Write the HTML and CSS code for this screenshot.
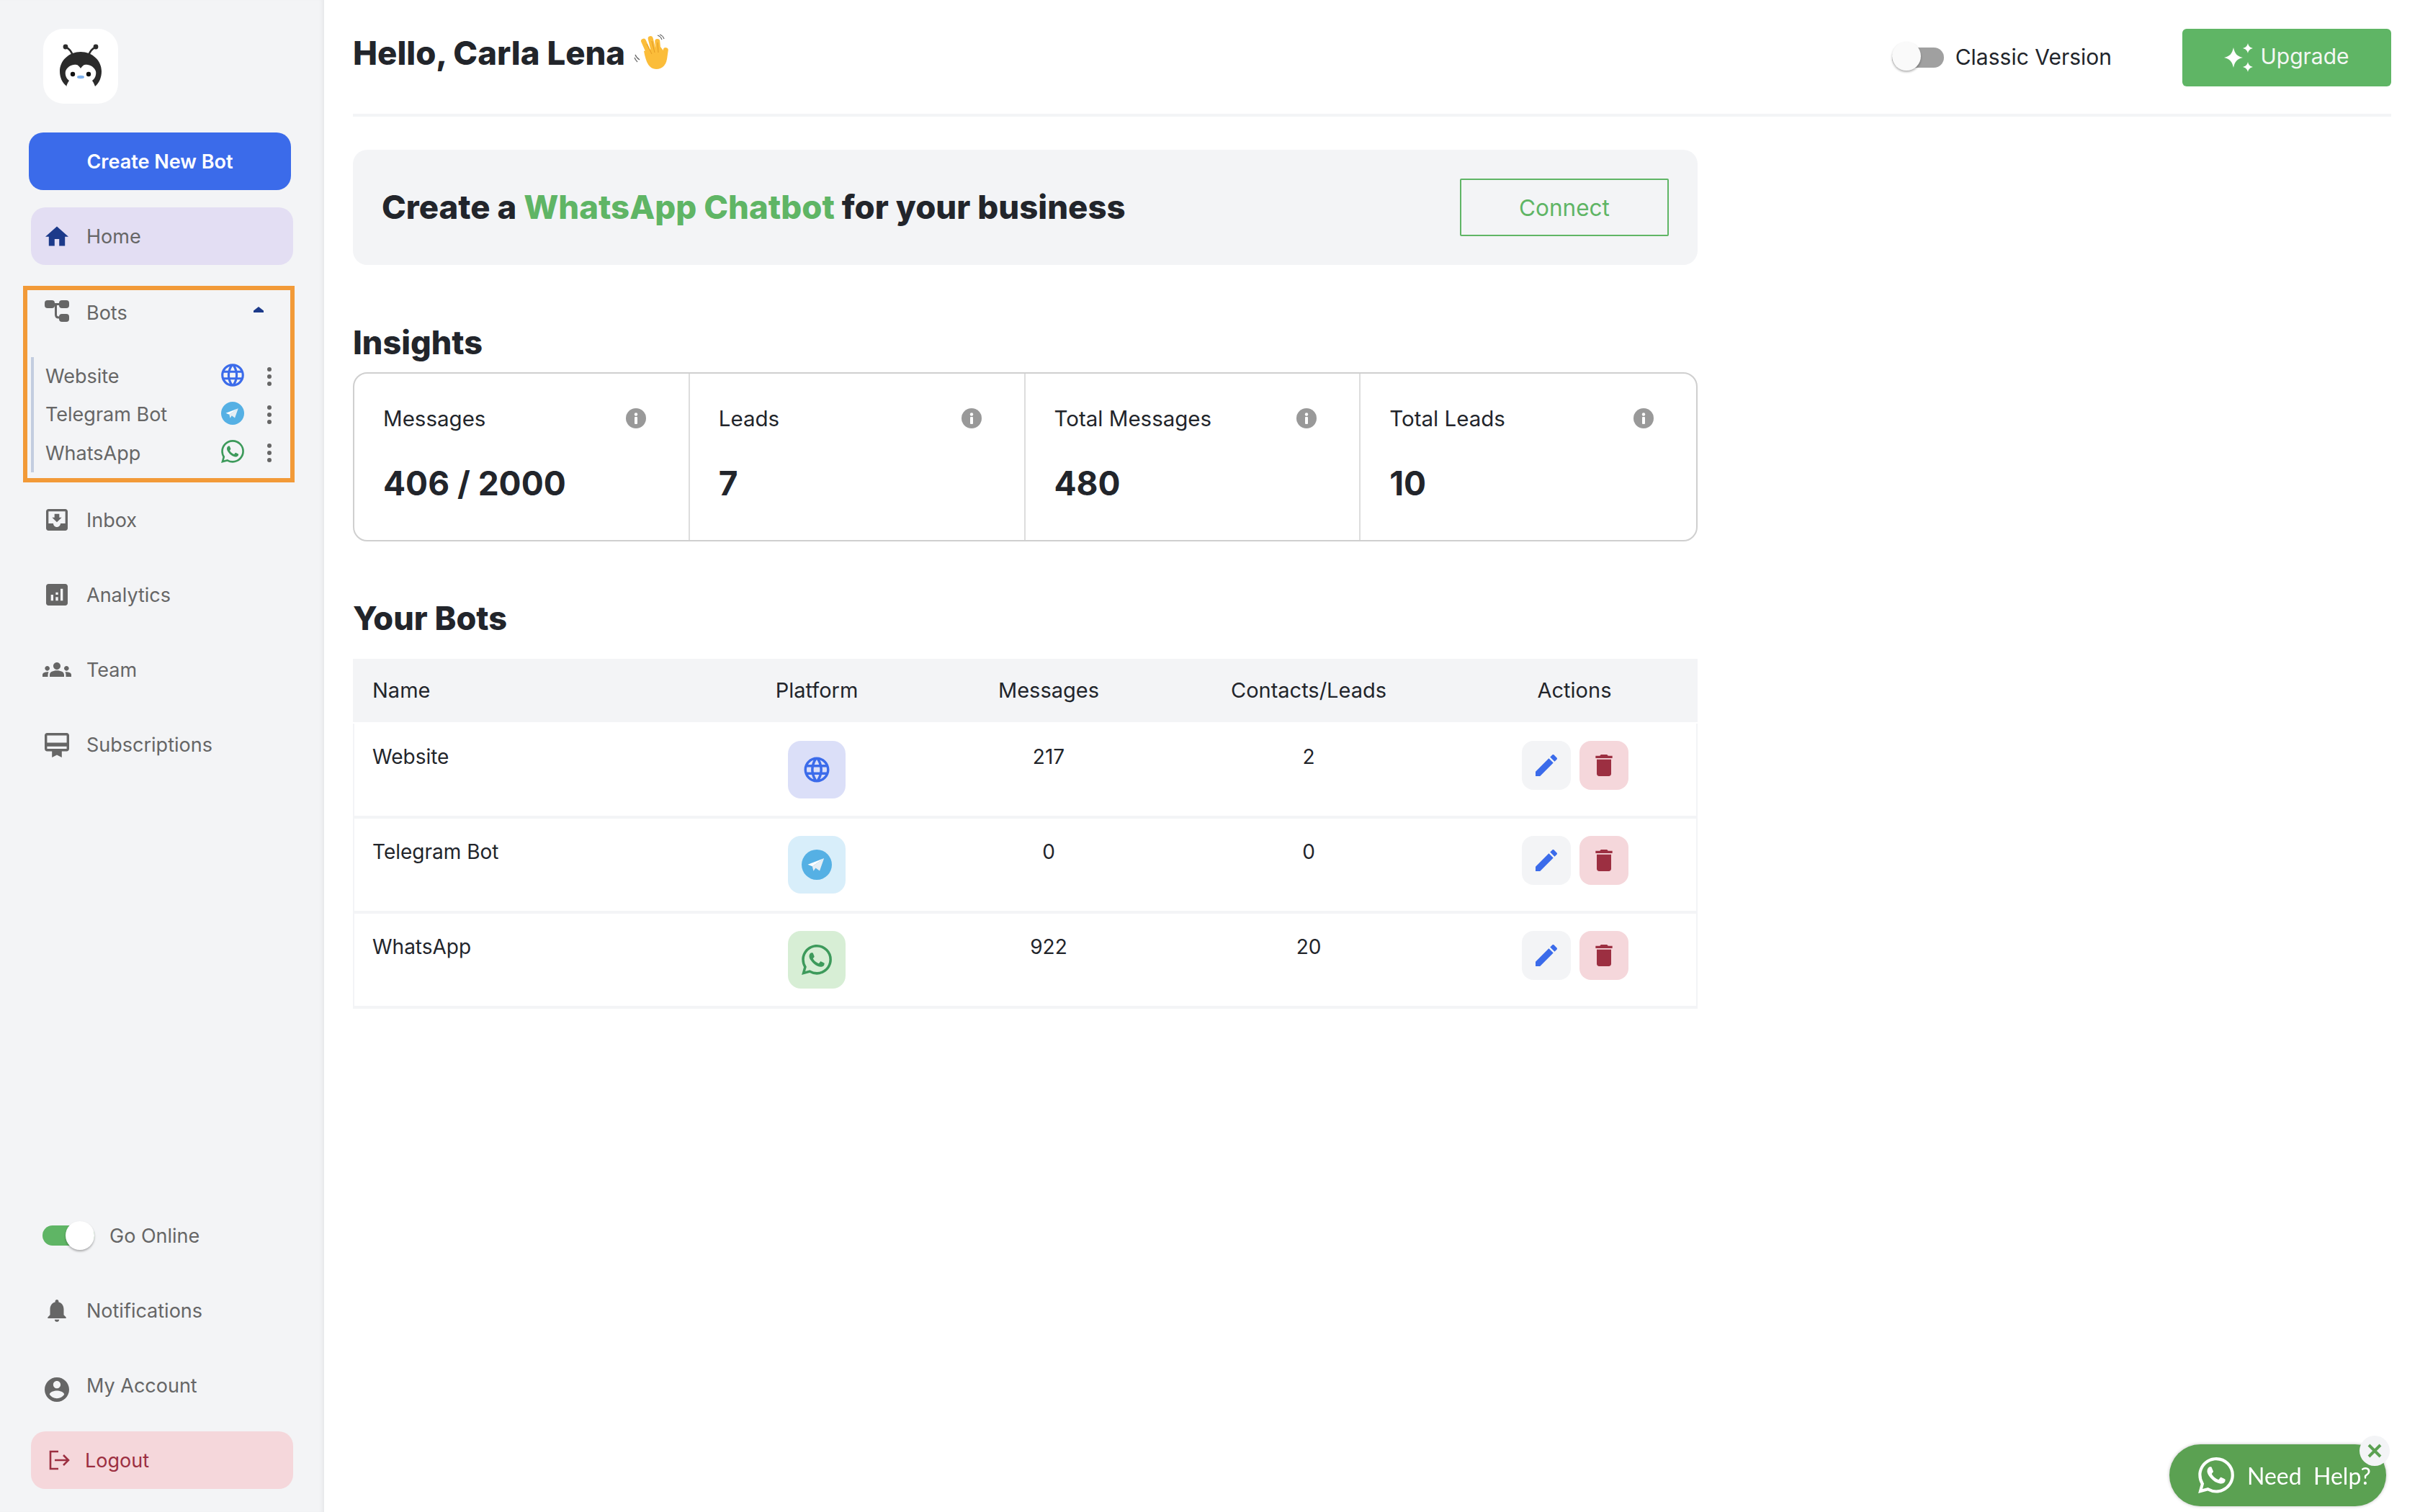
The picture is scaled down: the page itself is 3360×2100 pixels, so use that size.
FILE: index.html
```html
<!DOCTYPE html>
<html lang="en">
<head>
<meta charset="utf-8">
<title>Dashboard</title>
<link rel="stylesheet" href="styles.css">
</head>
<body>
<svg class="defs" width="0" height="0" aria-hidden="true">
  <symbol id="i-globe" viewBox="0 0 24 24"><path d="M11.99 2C6.47 2 2 6.48 2 12s4.47 10 9.99 10C17.52 22 22 17.52 22 12S17.52 2 11.99 2zm6.93 6h-2.95c-.32-1.25-.78-2.45-1.38-3.56 1.84.63 3.37 1.91 4.33 3.56zM12 4.04c.83 1.2 1.48 2.53 1.91 3.96h-3.82c.43-1.43 1.08-2.76 1.91-3.96zM4.26 14C4.1 13.36 4 12.69 4 12s.1-1.36.26-2h3.38c-.08.66-.14 1.32-.14 2 0 .68.06 1.34.14 2H4.26zm.82 2h2.95c.32 1.25.78 2.45 1.38 3.56-1.84-.63-3.37-1.9-4.33-3.56zm2.95-8H5.08c.96-1.66 2.49-2.93 4.33-3.56C8.81 5.55 8.35 6.75 8.03 8zM12 19.96c-.83-1.2-1.48-2.53-1.91-3.96h3.82c-.43 1.43-1.08 2.76-1.91 3.96zM14.34 14H9.66c-.09-.66-.16-1.32-.16-2 0-.68.07-1.35.16-2h4.68c.09.65.16 1.32.16 2 0 .68-.07 1.34-.16 2zm.25 5.56c.6-1.11 1.06-2.31 1.38-3.56h2.95c-.96 1.65-2.49 2.93-4.33 3.56zM16.36 14c.08-.66.14-1.32.14-2 0-.68-.06-1.34-.14-2h3.38c.16.64.26 1.31.26 2s-.1 1.36-.26 2h-3.38z"/></symbol>
  <symbol id="i-whatsapp" viewBox="0 0 24 24"><path d="M17.472 14.382c-.297-.149-1.758-.867-2.03-.967-.273-.099-.471-.148-.67.15-.197.297-.767.966-.94 1.164-.173.199-.347.223-.644.075-.297-.15-1.255-.463-2.39-1.475-.883-.788-1.48-1.761-1.653-2.059-.173-.297-.018-.458.13-.606.134-.133.298-.347.446-.52.149-.174.198-.298.298-.497.099-.198.05-.371-.025-.52-.075-.149-.669-1.612-.916-2.207-.242-.579-.487-.5-.669-.51-.173-.008-.371-.01-.57-.01-.198 0-.52.074-.792.372-.272.297-1.04 1.016-1.04 2.479 0 1.462 1.065 2.875 1.213 3.074.149.198 2.096 3.2 5.077 4.487.709.306 1.262.489 1.694.625.712.227 1.36.195 1.871.118.571-.085 1.758-.719 2.006-1.413.248-.694.248-1.289.173-1.413-.074-.124-.272-.198-.57-.347m-5.421 7.403h-.004a9.87 9.87 0 01-5.031-1.378l-.361-.214-3.741.982.998-3.648-.235-.374a9.86 9.86 0 01-1.51-5.26c.001-5.45 4.436-9.884 9.888-9.884 2.64 0 5.122 1.03 6.988 2.898a9.825 9.825 0 012.893 6.994c-.003 5.45-4.437 9.884-9.885 9.884m8.413-18.297A11.815 11.815 0 0012.05 0C5.495 0 .16 5.335.157 11.892c0 2.096.547 4.142 1.588 5.945L.057 24l6.305-1.654a11.882 11.882 0 005.683 1.448h.005c6.554 0 11.89-5.335 11.893-11.893a11.821 11.821 0 00-3.48-8.413z"/></symbol>
  <symbol id="i-telegram" viewBox="0 0 24 24"><circle cx="12" cy="12" r="12" fill="#55b0e4"/><path d="M17.8 6.9 4.9 11.8l3.6 1.5z" fill="#fff"/><path d="M17.8 6.9 8.5 13.3l.9 3.7 1.7-2.5 3.2 2.3z" fill="#e6eef4"/></symbol>
  <symbol id="i-dots" viewBox="0 0 8 28"><circle cx="4" cy="4" r="3"/><circle cx="4" cy="14" r="3"/><circle cx="4" cy="24" r="3"/></symbol>
  <symbol id="i-info" viewBox="0 0 28 28"><circle cx="14" cy="14" r="14" fill="#999"/><rect x="12" y="12" width="4" height="10" rx="1" fill="#fff"/><circle cx="14" cy="8.5" r="2.2" fill="#fff"/></symbol>
  <symbol id="i-edit" viewBox="0 0 24 24"><path d="M3 17.25V21h3.75L17.81 9.94l-3.75-3.75L3 17.25zM20.71 7.04c.39-.39.39-1.02 0-1.41l-2.34-2.34c-.39-.39-1.02-.39-1.41 0l-1.83 1.83 3.75 3.75 1.83-1.83z"/></symbol>
  <symbol id="i-delete" viewBox="0 0 24 24"><path d="M6 19c0 1.1.9 2 2 2h8c1.1 0 2-.9 2-2V7H6v12zM19 4h-3.5l-1-1h-5l-1 1H5v2h14V4z"/></symbol>
</svg>

<div class="app">
  <aside class="sidebar">
    <div class="logo">
      <svg class="logo-art" viewBox="0 0 58 65">
        <path d="M18 17C16 11 14 8 9 6M40 17C42 11 44 8 49 6" fill="none" stroke="#2b2b2b" stroke-width="2.600"/>
        <circle cx="8" cy="5" r="3.400" fill="#2b2b2b"/><circle cx="50" cy="5" r="3.400" fill="#2b2b2b"/>
        <path d="M10 60C3 55 0 47 0 39 0 24 13 12 29 12s29 12 29 27c0 8-3 16-9 21-1-3-2-5-4-8 4-3 6-8 5-13-2-6-9-10-15-9-2 0-4 2-6 5-2-3-4-5-6-5-6-1-13 3-15 9-1 5 1 10 5 13-2 3-3 5-4 8z" fill="#2b2b2b"/>
        <circle cx="18" cy="43" r="3.200" fill="#111"/><circle cx="40" cy="43" r="3.200" fill="#111"/>
        <ellipse cx="29" cy="47" rx="5" ry="2.200" fill="#7fb2ee"/>
      </svg>
    </div>
    <button class="create-btn">Create New Bot</button>

    <nav class="nav">
      <a class="nav-item nav-active">
        <svg class="nav-icon icon-home" viewBox="2 3 20 17"><path d="M10 20v-6h4v6h5v-8h3L12 3 2 12h3v8z"/></svg>
        <span>Home</span>
      </a>
      <section class="bots-box">
        <div class="bots-head">
          <svg class="nav-icon" viewBox="0 0 34 30"><rect x="0" y="0" width="14" height="11" rx="4"/><rect x="20" y="0" width="14" height="11" rx="4"/><rect x="20" y="19" width="14" height="11" rx="4"/><path d="M13 5.500h8M15.500 5.500V20q0 4 4 4H21" fill="none" stroke="#666" stroke-width="3"/></svg>
          <span class="bots-label">Bots</span>
          <span class="caret"></span>
        </div>
        <ul class="bot-list">
          <li class="bot-item">
            <span class="bot-name">Website</span>
            <svg class="bot-icon icon-blue"><use href="#i-globe"/></svg>
            <svg class="dots"><use href="#i-dots"/></svg>
          </li>
          <li class="bot-item">
            <span class="bot-name">Telegram Bot</span>
            <svg class="bot-icon tg-small"><use href="#i-telegram"/></svg>
            <svg class="dots"><use href="#i-dots"/></svg>
          </li>
          <li class="bot-item">
            <span class="bot-name">WhatsApp</span>
            <svg class="bot-icon tg-small icon-wa"><use href="#i-whatsapp"/></svg>
            <svg class="dots"><use href="#i-dots"/></svg>
          </li>
        </ul>
      </section>
      <a class="nav-item">
        <svg class="nav-icon" viewBox="3 3 18 18"><path d="M19 3H4.990c-1.110 0-1.980.890-1.980 2L3 19c0 1.100.880 2 1.990 2H19c1.100 0 2-.9 2-2V5c0-1.110-.9-2-2-2zm0 12h-4c0 1.660-1.350 3-3 3s-3-1.340-3-3H4.990V5H19v10zm-3-5h-2V7h-4v3H8l4 4 4-4z"/></svg>
        <span>Inbox</span>
      </a>
      <a class="nav-item">
        <svg class="nav-icon" viewBox="3 3 18 18"><path d="M19 3H5c-1.100 0-2 .9-2 2v14c0 1.100.9 2 2 2h14c1.100 0 2-.9 2-2V5c0-1.100-.9-2-2-2zM9 17H7v-5h2v5zm4 0h-2v-3h2v3zm0-5h-2v-2h2v2zm4 5h-2V7h2v10z"/></svg>
        <span>Analytics</span>
      </a>
      <a class="nav-item">
        <svg class="nav-icon icon-team" viewBox="0 0 24 24"><path d="M12 12.750c1.630 0 3.070.390 4.240.9 1.080.480 1.760 1.560 1.760 2.730V18H6v-1.610c0-1.180.680-2.260 1.760-2.730 1.170-.520 2.610-.910 4.240-.910zM4 13c1.100 0 2-.9 2-2s-.9-2-2-2-2 .9-2 2 .9 2 2 2zm1.130 1.100c-.370-.060-.740-.1-1.130-.1-.990 0-1.930.210-2.780.580C.480 14.900 0 15.620 0 16.430V18h4.500v-1.610c0-.830.230-1.610.630-2.290zM20 13c1.100 0 2-.9 2-2s-.9-2-2-2-2 .9-2 2 .9 2 2 2zm4 3.430c0-.810-.480-1.530-1.220-1.850-.850-.370-1.790-.580-2.780-.580-.390 0-.760.040-1.130.1.400.680.630 1.460.630 2.290V18H24v-1.570zM12 6c1.660 0 3 1.340 3 3s-1.340 3-3 3-3-1.340-3-3 1.340-3 3-3z"/></svg>
        <span>Team</span>
      </a>
      <a class="nav-item">
        <svg class="nav-icon icon-sub" viewBox="2 2 20 20"><path d="M20 2H4c-1.110 0-2 .890-2 2v11c0 1.110.890 2 2 2h4v5l4-2 4 2v-5h4c1.110 0 2-.890 2-2V4c0-1.110-.890-2-2-2zm0 13H4v-2h16v2zm0-5H4V4h16v6z"/></svg>
        <span>Subscriptions</span>
      </a>
    </nav>

    <div class="nav nav-bottom">
      <div class="nav-item online-row">
        <span class="switch switch-on"><span class="thumb"></span></span>
        <span>Go Online</span>
      </div>
      <a class="nav-item">
        <svg class="nav-icon icon-bell" viewBox="0 0 24 24"><path d="M12 22c1.100 0 2-.9 2-2h-4c0 1.100.890 2 2 2zm6-6v-5c0-3.070-1.640-5.640-4.500-6.320V4c0-.830-.670-1.500-1.500-1.500s-1.500.670-1.500 1.500v.680C7.630 5.360 6 7.920 6 11v5l-2 2v1h16v-1l-2-2z"/></svg>
        <span>Notifications</span>
      </a>
      <a class="nav-item account-row">
        <svg class="nav-icon icon-account" viewBox="2 2 20 20"><path d="M12 2C6.480 2 2 6.480 2 12s4.480 10 10 10 10-4.480 10-10S17.520 2 12 2zm0 3c1.660 0 3 1.340 3 3s-1.340 3-3 3-3-1.340-3-3 1.340-3 3-3zm0 14.200c-2.500 0-4.710-1.280-6-3.220.030-1.990 4-3.080 6-3.080 1.990 0 5.970 1.090 6 3.080-1.290 1.940-3.500 3.220-6 3.220z"/></svg>
        <span>My Account</span>
      </a>
      <a class="nav-item nav-logout">
        <svg class="logout-icon" viewBox="0 0 30 28"><path d="M14 2H3v24h11M9 14h19M21 7l7 7-7 7" fill="none" stroke="#9c2f41" stroke-width="2.600"/></svg>
        <span>Logout</span>
      </a>
    </div>
  </aside>

  <main class="main">
    <header class="topbar">
      <h1 class="hello">Hello, Carla Lena
        <svg class="wave" viewBox="0 0 48 50">
          <g fill="#fbbd3a">
            <rect x="22" y="3" width="7" height="26" rx="3.500" transform="rotate(-14 25 16)"/>
            <rect x="14" y="6" width="7" height="26" rx="3.500" transform="rotate(-24 17 19)"/>
            <rect x="30" y="7" width="7" height="24" rx="3.500" transform="rotate(-5 33 19)"/>
            <rect x="40" y="19" width="7" height="18" rx="3.500" transform="rotate(8 43 28)"/>
            <path d="M14 24 37 18 46 30C47 42 40 49 31 49 22 49 17 41 14 24z"/>
          </g>
          <path d="M25 10l4 16M18 14l7 14M33 12l1 14" stroke="#e39a22" stroke-width="1" fill="none"/>
          <path d="M33 2c3 1 5 3 6 6M36 1c3 1 5 3 6 6M2 29c1 3 3 5 6 7M1 33c1 3 2 4 4 6" stroke="#666" stroke-width="1.200" fill="none"/>
        </svg>
      </h1>
      <div class="top-actions">
        <label class="classic">
          <span class="switch switch-off"><span class="thumb"></span></span>
          <span>Classic Version</span>
        </label>
        <button class="upgrade-btn">
          <svg class="sparkle" viewBox="0 0 40 40"><path d="M13 6c2 9 5 12 13 14-8 2-11 5-13 14C11 25 8 22 0 20c8-2 11-5 13-14zM33 0c1 4 3 6 7 7-4 1-6 3-7 7-1-4-3-6-7-7 4-1 6-3 7-7zM33 26c1 4 3 6 7 7-4 1-6 3-7 7-1-4-3-6-7-7 4-1 6-3 7-7z" fill="#fff"/></svg>
          <span>Upgrade</span>
        </button>
      </div>
    </header>

    <section class="banner">
      <h2 class="banner-title">Create a <em>WhatsApp Chatbot</em> for your business</h2>
      <button class="connect-btn">Connect</button>
    </section>

    <h2 class="section-title insights-title">Insights</h2>
    <div class="stats">
      <article class="stat">
        <div class="stat-top"><span>Messages</span><svg class="info"><use href="#i-info"/></svg></div>
        <div class="stat-value">406 / 2000</div>
      </article>
      <article class="stat">
        <div class="stat-top"><span>Leads</span><svg class="info"><use href="#i-info"/></svg></div>
        <div class="stat-value">7</div>
      </article>
      <article class="stat">
        <div class="stat-top"><span>Total Messages</span><svg class="info"><use href="#i-info"/></svg></div>
        <div class="stat-value">480</div>
      </article>
      <article class="stat">
        <div class="stat-top"><span>Total Leads</span><svg class="info"><use href="#i-info"/></svg></div>
        <div class="stat-value">10</div>
      </article>
    </div>

    <h2 class="section-title bots-title">Your Bots</h2>
    <div class="table">
      <div class="t-row t-head">
        <div class="t-name">Name</div><div>Platform</div><div>Messages</div><div>Contacts/Leads</div><div>Actions</div>
      </div>
      <div class="t-row t-body">
        <div class="t-name">Website</div>
        <div><span class="tile tile-web"><svg class="tile-icon icon-blue"><use href="#i-globe"/></svg></span></div>
        <div>217</div><div>2</div>
        <div class="t-actions">
          <button class="act act-edit"><svg class="act-icon"><use href="#i-edit"/></svg></button>
          <button class="act act-del"><svg class="act-icon"><use href="#i-delete"/></svg></button>
        </div>
      </div>
      <div class="t-row t-body">
        <div class="t-name">Telegram Bot</div>
        <div><span class="tile tile-tg"><svg class="tile-icon"><use href="#i-telegram"/></svg></span></div>
        <div>0</div><div>0</div>
        <div class="t-actions">
          <button class="act act-edit"><svg class="act-icon"><use href="#i-edit"/></svg></button>
          <button class="act act-del"><svg class="act-icon"><use href="#i-delete"/></svg></button>
        </div>
      </div>
      <div class="t-row t-body">
        <div class="t-name">WhatsApp</div>
        <div><span class="tile tile-wa"><svg class="tile-icon icon-wa"><use href="#i-whatsapp"/></svg></span></div>
        <div>922</div><div>20</div>
        <div class="t-actions">
          <button class="act act-edit"><svg class="act-icon"><use href="#i-edit"/></svg></button>
          <button class="act act-del"><svg class="act-icon"><use href="#i-delete"/></svg></button>
        </div>
      </div>
    </div>
  </main>
</div>

<div class="help">
  <svg class="help-icon"><use href="#i-whatsapp"/></svg>
  <span>Need&nbsp; Help?</span>
  <span class="help-close"><svg viewBox="0 0 20 20"><path d="M2 2l16 16M18 2 2 18" stroke="#5ba152" stroke-width="4"/></svg></span>
</div>
</body>
</html>
```

FILE: styles.css
```css
* { box-sizing: border-box; }
html, body { margin: 0; height: 2100px; overflow: hidden; background: #fff; }
body { font-family: "Inter", "Liberation Sans", sans-serif; color: #22252b; font-size: 29.500px; }
.defs { position: absolute; }
h1, h2, ul { margin: 0; padding: 0; }
button { font-family: inherit; border: 0; cursor: pointer; }

.app { display: flex; height: 2100px; }

/* sidebar */
.sidebar {
  width: 450px; flex: none; height: 100%;
  display: flex; flex-direction: column;
  padding: 40px 0 32px;
  background: #f3f4f6;
  box-shadow: inset -6px 0 6px -4px rgba(0, 0, 0, .06);
  color: #666;
  font-size: 27px;
}
.logo {
  width: 104px; height: 104px; margin-left: 60px;
  background: #fff; border-radius: 28px;
  display: flex; align-items: center; justify-content: center;
}
.logo-art { width: 58px; height: 65px; }
.create-btn {
  width: 364px; height: 80px; margin: 40px 0 0 40px;
  background: #3b6bea; color: #fff; border-radius: 20px;
  font-size: 27px; font-weight: 600;
}
.nav { display: flex; flex-direction: column; margin-top: 24px; }
.nav-item {
  display: flex; align-items: center;
  width: 364px; height: 80px; margin: 0 0 24px 43px;
  padding-left: 21px; gap: 26px;
  border-radius: 20px;
}
.nav-icon { width: 30px; height: 30px; fill: #666; flex: none; }
.nav-active { background: #e3def3; }
.icon-home { fill: #1c3a8a; width: 32px; height: 28px; margin: 0 -1px; }
.icon-blue { fill: #3b6bea; }
.icon-wa { fill: #3d9a5b; }

.bots-box {
  width: 377px; height: 273px; margin: 5px 0 12px 32px;
  border: 6px solid #f29a38;
  padding: 0 0 0 5px;
}
.bots-head { display: flex; align-items: center; height: 62px; padding: 0 0 0 19px; }
.bots-head .nav-icon { width: 34px; height: 30px; margin-top: -4px; }
.bots-label { margin-left: 24px; }
.caret {
  margin: -8px 0 0 auto; margin-right: 37px;
  width: 14px; height: 8px; background: #1c3a8a;
  clip-path: polygon(50% 0, 100% 70%, 100% 100%, 0 100%, 0 70%);
}
.bot-list {
  list-style: none; margin-top: 31px; height: 160px;
  border-left: 4px solid #c3cde0;
  padding-top: 0;
  display: flex; flex-direction: column; justify-content: center; gap: 0;
}
.bot-item { display: flex; align-items: center; height: 53.600px; padding-left: 16px; }
.bot-name { width: 241px; }
.bot-icon { width: 38px; height: 38px; flex: none; margin-top: -4px; }
.tg-small { width: 32px; height: 32px; margin-left: 3px; margin-right: 3px; }
.dots { width: 8px; height: 28px; fill: #666; margin-left: 28px; flex: none; }

.icon-team { width: 40px; height: 40px; margin-left: -5px; margin-right: -5px; }
.icon-sub { width: 34px; height: 34px; margin-left: -2px; margin-right: -2px; margin-top: 2px; }
.icon-bell { width: 38px; height: 38px; margin: 0 -4px; }
.icon-account { width: 34px; height: 34px; margin: 12px -2px 0; }

.nav-bottom { margin-top: auto; }
.nav-bottom .nav-item:last-child { margin-bottom: 0; }
.online-row { padding-left: 16px; gap: 21px; }
.account-row { align-items: center; }
.nav-logout { background: #f5d7db; color: #9c2f41; gap: 21px; padding-left: 24px; }
.logout-icon { width: 30px; height: 28px; flex: none; }

.switch { position: relative; display: block; flex: none; height: 28px; border-radius: 14px; }
.thumb {
  position: absolute; top: -6px; width: 40px; height: 40px; border-radius: 50%;
  background: #fff; box-shadow: 0 2px 3px rgba(0, 0, 0, .3);
}
.switch-on { width: 72px; background: #5fb565; }
.switch-on .thumb { right: 0; }
.switch-off { width: 72px; background: #a0a0a0; }
.switch-off .thumb { left: 0; background: #fafafa; }

/* main */
.main { flex: 1; padding-left: 40px; padding-right: 40px; min-width: 0; }
.topbar {
  height: 162px; border-bottom: 4px solid #f3f4f6;
  display: flex; justify-content: space-between; align-items: flex-start;
}
.hello { font-size: 45.500px; font-weight: 800; line-height: 56px; margin-top: 46px; display: flex; align-items: center; gap: 12px; }
.wave { width: 48px; height: 50px; margin-top: -4px; }
.top-actions { display: flex; align-items: center; margin-top: 40px; height: 80px; }
.classic { display: flex; align-items: center; gap: 16px; color: #22252b; font-size: 30px; }
.classic span:last-child { margin-top: -2px; }
.upgrade-btn {
  margin-left: 98px; width: 290px; height: 80px;
  background: #5fb565; color: #f3f7f3; border-radius: 6px; font-size: 30px;
  display: flex; align-items: center; justify-content: center; gap: 10px;
}
.sparkle { width: 40px; height: 40px; }
.upgrade-btn span { margin-top: -4px; }

.banner {
  width: 1867px; height: 160px; margin-top: 46px;
  background: #f3f4f6; border-radius: 20px;
  display: flex; align-items: center; justify-content: space-between;
  padding: 0 40px;
}
.banner-title { font-size: 45.500px; font-weight: 800; margin-top: -2px; }
.banner-title em { font-style: normal; color: #5fb565; }
.connect-btn {
  width: 290px; height: 80px;
  background: transparent; border: 2px solid #5fb565; border-radius: 2px; color: #5fb565;
  font-size: 31.500px;
}
.section-title { font-size: 45px; font-weight: 800; line-height: 56px; }
.insights-title { margin-top: 80px; }
.stats {
  width: 1867px; height: 235px; margin-top: 13px;
  border: 2px solid #cfcfcf; border-radius: 20px;
  display: grid; grid-template-columns: repeat(4, 1fr);
}
.stat { padding: 0 59px 0 40px; border-right: 2px solid #dddddd; }
.stat:last-child { border-right: 0; }
.stat-top { display: flex; justify-content: space-between; align-items: center; height: 36px; margin-top: 44px; }
.info { width: 28px; height: 28px; }
.stat-value { font-size: 46px; font-weight: 700; line-height: 60px; margin-top: 42px; }
.bots-title { margin-top: 79px; }

.table { width: 1867px; margin-top: 28px; }
.t-row { display: grid; grid-template-columns: 485px 318px 326px 396px 342px; text-align: center; font-size: 29px; }
.t-name { text-align: left; padding-left: 27px; }
.t-head { height: 88px; background: #f3f4f6; align-items: center; }
.t-head > div { margin-top: -2px; }
.t-body {
  height: 132px; font-size: 28px;
  grid-template-columns: 483px 318px 326px 396px 340px;
  border-bottom: 4px solid #f3f4f6; border-left: 2px solid #f3f4f6; border-right: 2px solid #f3f4f6;
}
.t-head + .t-body { margin-top: 2px; }
.t-body > div { padding-top: 26px; line-height: 40px; }
.t-body > div:nth-child(2), .t-body > .t-actions { padding-top: 24px; }
.t-body .t-name { padding-left: 25px; }
.tile { display: inline-flex; width: 80px; height: 80px; border-radius: 18px; align-items: center; justify-content: center; }
.tile-web { background: #dbdff8; }
.tile-tg { background: #d8eefa; }
.tile-wa { background: #d7eed5; }
.tile-icon { width: 42px; height: 42px; }
.t-actions { display: flex; justify-content: center; align-items: flex-start; gap: 12px; padding-left: 3px; }
.act { width: 68px; height: 68px; border-radius: 16px; padding: 0; display: flex; align-items: center; justify-content: center; }
.act-edit { background: #f3f4f6; fill: #3b6bea; }
.act-del { background: #f5d7db; fill: #9c2f41; }
.act-icon { width: 40px; height: 40px; }

/* floating help */
.help {
  position: fixed; left: 3012px; top: 2006px; width: 301px; height: 86px;
  border-radius: 43px; background: #5ba152; color: #fff; font-size: 32px;
  font-family: "Lato", sans-serif;
  display: flex; align-items: center; padding-left: 40px; gap: 18px;
  box-shadow: 0 0 4px rgba(0, 0, 0, .25);
}
.help-icon { width: 50px; height: 50px; fill: #fff; flex: none; }
.help > span:not(.help-close) { white-space: nowrap; }
.help-close {
  position: absolute; right: -5px; top: -12px; width: 42px; height: 42px; border-radius: 50%;
  background: #f3f4f6; display: flex; align-items: center; justify-content: center;
}
.help-close svg { width: 20px; height: 20px; }
```
